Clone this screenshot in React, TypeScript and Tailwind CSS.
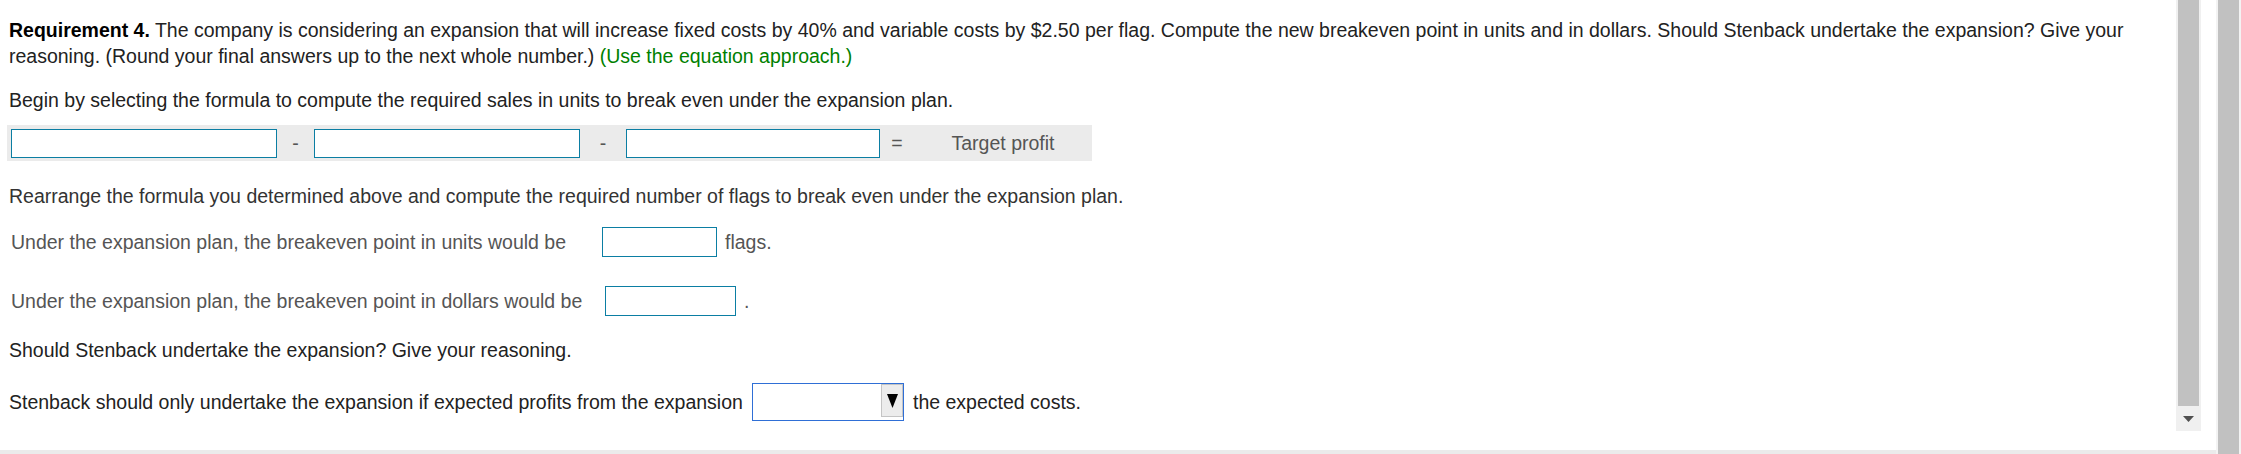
import React from "react";

const font = { fontFamily: '"Liberation Sans", Arial, sans-serif' };

export default function App() {
  return (
    <div className="relative w-[2241px] h-[454px] bg-white overflow-hidden" style={font}>
      {/* content */}
      <div className="w-[2216px] h-[450px] pl-[9px] pt-[17px] pr-[60px] text-[19.5px] leading-[26px] text-[#222]">
        <p className="w-[2150px]">
          <b className="text-black">Requirement 4.</b> The company is considering an expansion that will increase fixed costs by 40% and variable costs by $2.50 per flag. Compute the new breakeven point in units and in dollars. Should Stenback undertake the expansion? Give your reasoning. (Round your final answers up to the next whole number.){" "}
          <span className="text-[#008000]">(Use the equation approach.)</span>
        </p>
        <p className="mt-[18px]">Begin by selecting the formula to compute the required sales in units to break even under the expansion plan.</p>

        <div className="mt-[12px] ml-[-2px] w-[1085px] h-[36px] bg-[#ebebeb] flex items-center pl-[4px] text-[#555]">
          <div className="w-[266px] h-[29px] bg-white border-[1.5px] border-[#0b7ea3]" />
          <div className="w-[37px] text-center">-</div>
          <div className="w-[266px] h-[29px] bg-white border-[1.5px] border-[#0b7ea3]" />
          <div className="w-[46px] text-center">-</div>
          <div className="w-[254px] h-[29px] bg-white border-[1.5px] border-[#0b7ea3]" />
          <div className="w-[34px] text-center">=</div>
          <div className="w-[178px] text-center">Target profit</div>
        </div>

        <p className="mt-[22px] text-[#333]">Rearrange the formula you determined above and compute the required number of flags to break even under the expansion plan.</p>

        <div className="mt-[18px] flex items-center h-[30px] text-[#555]">
          <span className="w-[593px] shrink-0 whitespace-nowrap pl-[2px]">Under the expansion plan, the breakeven point in units would be</span>
          <div className="w-[115px] h-[30px] shrink-0 border-[1.5px] border-[#0b7ea3] bg-white" />
          <span className="ml-[8px]">flags.</span>
        </div>

        <div className="mt-[29px] flex items-center h-[30px] text-[#555]">
          <span className="w-[596px] shrink-0 whitespace-nowrap pl-[2px]">Under the expansion plan, the breakeven point in dollars would be</span>
          <div className="w-[131px] h-[30px] shrink-0 border-[1.5px] border-[#0b7ea3] bg-white" />
          <span className="ml-[8px]">.</span>
        </div>

        <p className="mt-[21px]">Should Stenback undertake the expansion? Give your reasoning.</p>

        <div className="mt-[20px] flex items-center h-[38px]">
          <span className="w-[743px] shrink-0 whitespace-nowrap">Stenback should only undertake the expansion if expected profits from the expansion</span>
          <div className="relative w-[152px] h-[38px] shrink-0 border-[1.5px] border-[#2f6fd6] bg-white">
            <div className="absolute right-0 top-0 w-[22px] h-[33px] bg-[#ececec] border border-[#c4c4c4] flex items-center justify-center">
              <svg width="11" height="14" viewBox="0 0 11 14"><path d="M0 0 H11 L5.5 14 Z" fill="#000" /></svg>
            </div>
          </div>
          <span className="ml-[9px] whitespace-nowrap">the expected costs.</span>
        </div>
      </div>

      {/* bottom strip */}
      <div className="absolute left-0 bottom-0 w-[2216px] h-[4px] bg-[#ebebeb]" />

      {/* inner scrollbar */}
      <div className="absolute left-[2176px] top-0 w-[25px] h-[431px] bg-[#f0f0f0]">
        <div className="absolute left-[2px] top-0 w-[21px] h-[406px] bg-[#c1c1c1]" />
        <div className="absolute left-0 top-[406px] w-[25px] h-[25px] flex items-center justify-center">
          <svg width="11" height="6" viewBox="0 0 11 6"><path d="M0 0 H11 L5.5 6 Z" fill="#505050" /></svg>
        </div>
      </div>

      {/* outer scrollbar */}
      <div className="absolute left-[2216px] top-0 w-[25px] h-[454px] bg-[#f3f3f3]">
        <div className="absolute left-[2px] top-0 w-[21px] h-[454px] bg-[#c1c1c1]" />
      </div>
    </div>
  );
}
